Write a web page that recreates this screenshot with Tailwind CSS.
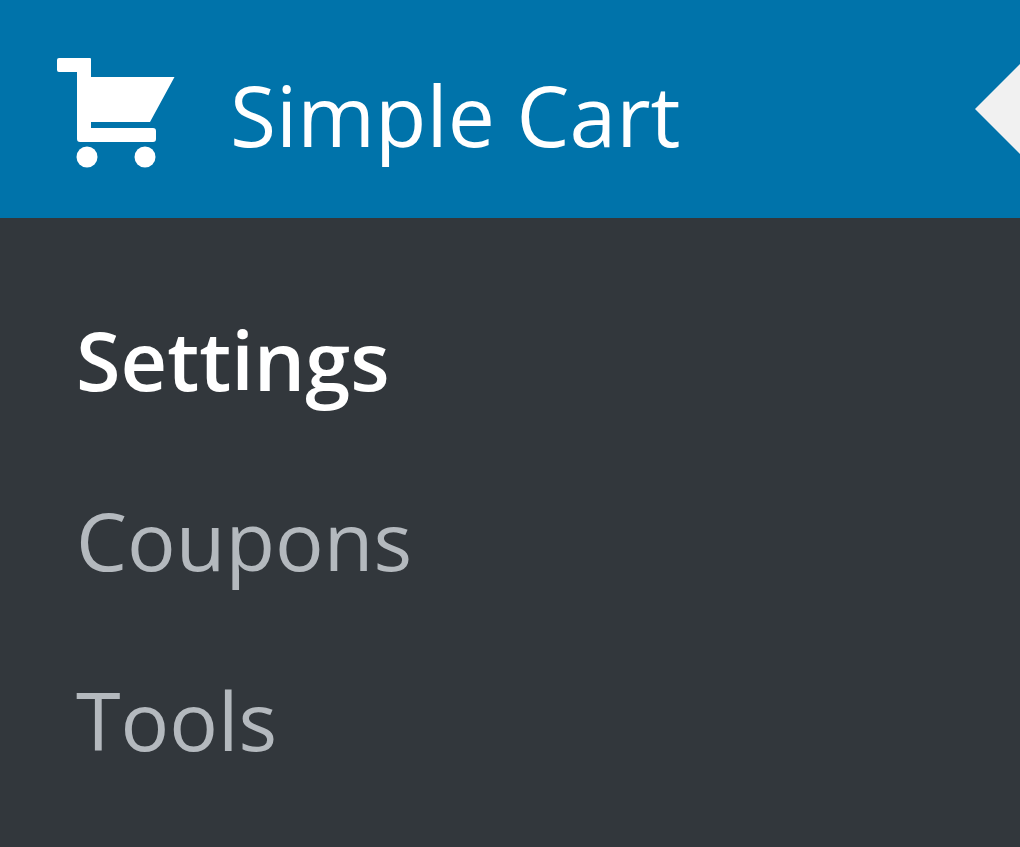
<!DOCTYPE html>
<html lang="en">
<head>
  <meta charset="UTF-8">
  <title>Simple Cart</title>
  <meta name="viewport" content="width=device-width, initial-scale=1.0">
  <script src="https://cdn.jsdelivr.net/npm/@tailwindcss/browser@4"></script>
</head>
<body class="bg-[#32373c] min-h-screen overflow-x-hidden font-['Open_Sans','Noto_Sans',sans-serif]">
  <nav aria-label="Admin menu">
    <!-- Current top level item -->
    <a href="#" class="relative flex items-center gap-[54px] h-[218px] pt-2 pl-14 overflow-hidden bg-[#0073aa] text-white">
      <svg class="w-[120px] h-[112px] shrink-0" viewBox="0 0 120 112" fill="currentColor" aria-hidden="true">
        <path d="M3 1h31a1 1 0 0 1 1 1v18h83.500L94 65H35v6h62a3 3 0 0 1 3 3v8a3 3 0 0 1-3 3H24a3 3 0 0 1-3-3V15H3a2 2 0 0 1-2-2V3a2 2 0 0 1 2-2z"/>
        <circle cx="31" cy="100" r="10.500"/>
        <circle cx="89" cy="100" r="10.500"/>
      </svg>
      <span class="pt-1 text-[84px] leading-[120px] whitespace-nowrap">Simple Cart</span>
      <!-- Arrow pointing at the open item -->
      <svg class="absolute right-0 top-16 w-[45px] h-[90px]" viewBox="0 0 45 90" fill="#f1f1f1" aria-hidden="true">
        <path d="M45 0v90L0 45z"/>
      </svg>
    </a>

    <ul class="pt-[52px] pl-[76px] text-[81px] leading-[180px] text-[#b4b9be]">
      <li><a href="#" class="block font-semibold text-white" aria-current="page">Settings</a></li>
      <li><a href="#" class="block">Coupons</a></li>
      <li><a href="#" class="block">Tools</a></li>
    </ul>
  </nav>
</body>
</html>
